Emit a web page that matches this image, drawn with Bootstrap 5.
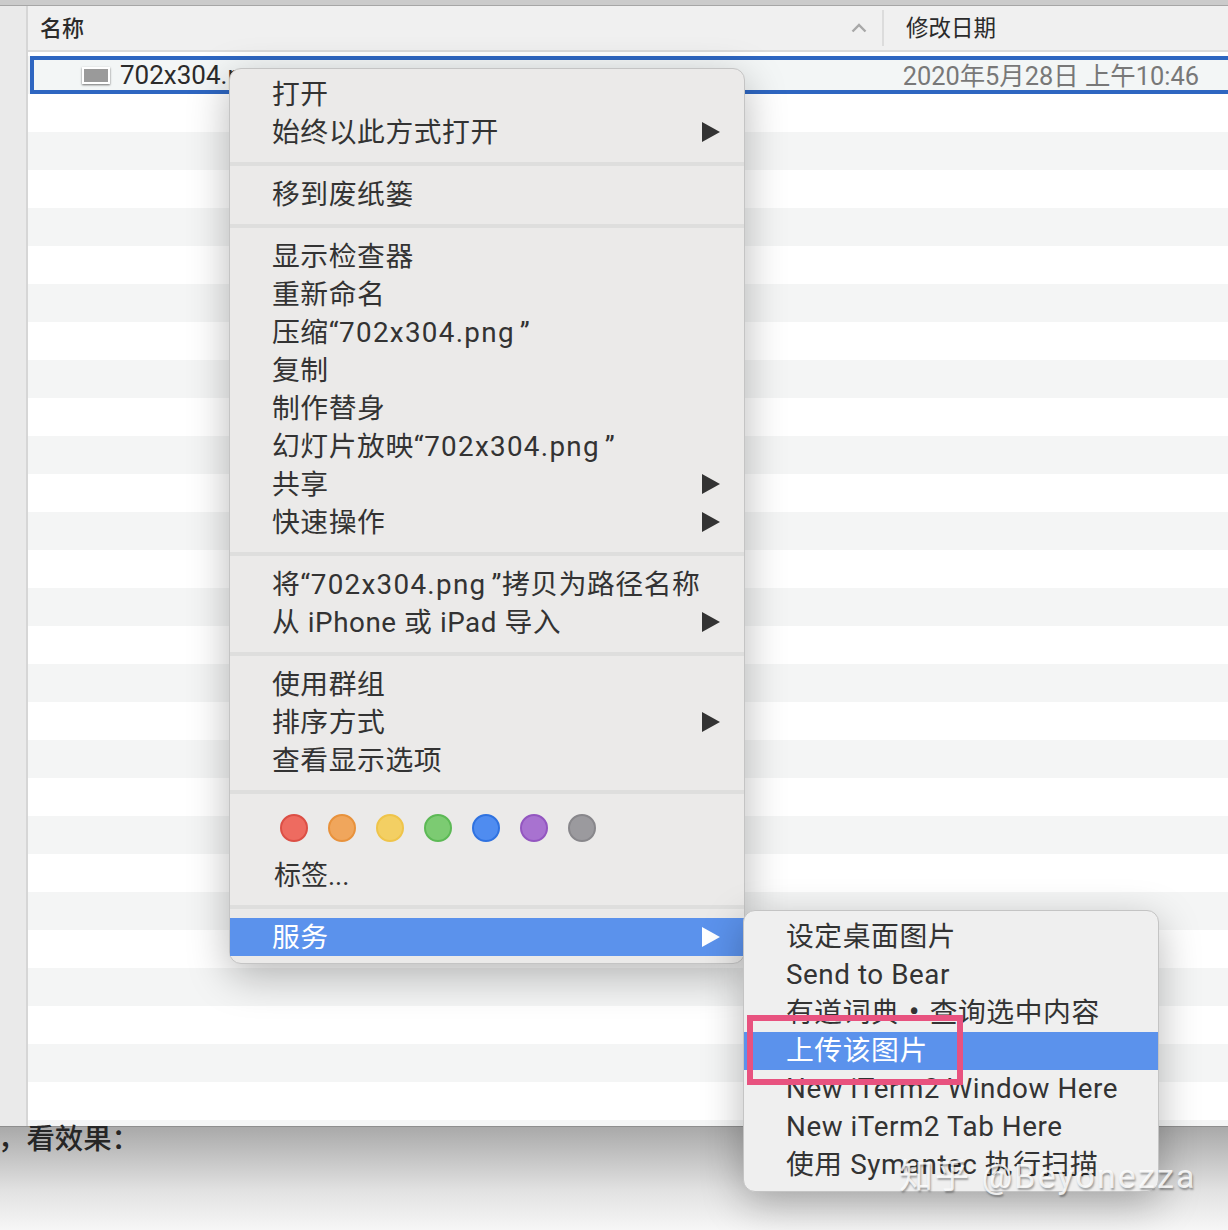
<!DOCTYPE html>
<html lang="zh-CN">
<head>
  <meta charset="UTF-8">
  <title>Finder 右键菜单</title>
  <meta name="viewport" content="width=device-width, initial-scale=1">
  <link href="https://cdn.jsdelivr.net/npm/bootstrap@5.3.3/dist/css/bootstrap.min.css" rel="stylesheet">
  <style>
    html, body { height: 1230px; }
    body {
      position: relative; overflow: hidden; background: #fff; color: #2b2b2b;
      font-family: Roboto, "Noto Sans CJK SC", sans-serif;
    }
    .top-strip { height: 6px; background: #cbcbcb; border-bottom: 1px solid #a6a6a6; }
    .finder-win { height: 1121px; border-bottom: 1px solid #8e8e8e; }
    .side-bar { width: 28px; background: #eaeaea; border-right: 2px solid #d6d6d6; }
    .col-head { height: 46px; background: #f0f0f0; border-bottom: 2px solid #dadada; font-size: 22px; line-height: 45px; }
    .name-head { width: 854px; padding-left: 12px; }
    .head-sep { width: 2px; height: 36px; margin-top: 4px; margin-left: 15px; background: #dcdcdc; }
    .date-head { padding-left: 22px; font-size: 22.5px; }
    .sort-caret { margin: 17px 0 0 -31px; width: 16px; height: 10px; }
    .file-list {
      padding-top: 4px;
      background: linear-gradient(#f4f5f5 50%, #fff 50%) 0 4px / 100% 76px;
    }
    .sel-row {
      height: 38px; margin-left: 2px; background: #f3f6f6;
      border: 4px solid #2e66c1; border-right: 0;
      font-size: 26px; line-height: 30px;
    }
    .file-icon { width: 28px; height: 17px; margin-left: 48px; background: #9a9a9a; border: 2px solid #fff; box-shadow: 0 1px 2px rgba(0,0,0,.55); }
    .file-name { margin-left: 10px; }
    .file-date { margin-left: auto; padding: 2px 29px 0 0; color: #787878; white-space: nowrap; font-size: 25.4px; }
    .page-foot { height: 103px; background: linear-gradient(#a9a9a9, #e2e2e2 62%, #f6f6f6 100%); }
    .foot-text { margin-left: -2px; font-size: 28.4px; line-height: 26px; font-weight: 500; color: #262626; }

    .ctx-menu.dropdown-menu {
      position: absolute; display: block; margin: 0; min-width: 0;
      background: #ebeae9; border: 1px solid #c4c4c4; border-radius: 12px;
      box-shadow: 0 12px 42px rgba(0,0,0,.28);
      font-size: 27.8px; letter-spacing: .55px; color: #333;
    }
    .menu-main.dropdown-menu { left: 229px; top: 68px; width: 516px; padding: 6px 0 7px; }
    .menu-sub.dropdown-menu { left: 743px; top: 910px; width: 416px; padding: 7px 0; background: #efefef; }
    .ctx-menu .dropdown-item {
      display: flex; justify-content: space-between; align-items: center;
      height: 38px; line-height: 38px; padding: 0 24px 0 42px; color: #333; white-space: nowrap;
    }
    .menu-main .dropdown-item { padding-top: 2px; }
    .ctx-menu .dropdown-item.active { background: #5b92ec; color: #fff; }
    .ctx-menu .dropdown-divider { height: 4px; margin: 11px 0 9px; border: 0; background: #dededd; opacity: 1; }
    .menu-arrow { width: 18px; height: 20px; fill: #333; flex: none; margin-top: -2px; }
    .active .menu-arrow { fill: #fff; }
    .tag-dots { height: 30px; margin-top: 20px; padding-left: 50px; gap: 20px; }
    .tag-dot { width: 28px; height: 28px; border-radius: 50%; border: 2px solid; }
    .tag-label { height: 37px; margin-top: 13px; padding-left: 44px; font-size: 27px; line-height: 38px; letter-spacing: 0; }
    .file-ref { letter-spacing: 1.3px; margin-right: 5px; }
    .dot-sep { margin: 0 2px; font-size: 32px; line-height: 1; }

    .pink-box { position: absolute; z-index: 1001; left: 747px; top: 1015px; width: 216px; height: 70px; border: 6px solid #e8527f; }
    .zhihu-mark {
      position: absolute; z-index: 1001; left: 899px; top: 1154px; font-size: 34px; letter-spacing: 2.1px; line-height: 44px; white-space: nowrap;
      color: rgba(255,255,255,.82); text-shadow: 1px 2px 2px rgba(0,0,0,.35);
    }
  </style>
</head>
<body>

  <div class="top-strip"></div>
  <div class="finder-win d-flex">
    <div class="side-bar flex-shrink-0"></div>
    <div class="flex-grow-1 d-flex flex-column">
      <div class="col-head d-flex">
        <div class="name-head fw-medium">名称</div>
        <svg class="sort-caret" viewBox="0 0 16 10"><path d="M1.5 8.5 8 2l6.5 6.5" fill="none" stroke="#a8a8a8" stroke-width="2.4"/></svg>
        <div class="head-sep"></div>
        <div class="date-head">修改日期</div>
      </div>
      <div class="file-list flex-grow-1">
        <div class="sel-row d-flex align-items-center">
          <div class="file-icon flex-shrink-0"></div>
          <div class="file-name">702x304.png</div>
          <div class="file-date">2020年5月28日 上午10:46</div>
        </div>
      </div>
    </div>
  </div>
  <div class="page-foot">
    <div class="foot-text">，看效果：</div>
  </div>

  <div class="dropdown-menu show ctx-menu menu-main">
    <a class="dropdown-item">打开</a>
    <a class="dropdown-item">始终以此方式打开<svg class="menu-arrow" viewBox="0 0 18 20"><path d="M0 0l18 10L0 20z"/></svg></a>
    <hr class="dropdown-divider">
    <a class="dropdown-item">移到废纸篓</a>
    <hr class="dropdown-divider">
    <a class="dropdown-item">显示检查器</a>
    <a class="dropdown-item">重新命名</a>
    <a class="dropdown-item"><span>压缩“<span class="file-ref">702x304.png</span>”</span></a>
    <a class="dropdown-item">复制</a>
    <a class="dropdown-item">制作替身</a>
    <a class="dropdown-item"><span>幻灯片放映“<span class="file-ref">702x304.png</span>”</span></a>
    <a class="dropdown-item">共享<svg class="menu-arrow" viewBox="0 0 18 20"><path d="M0 0l18 10L0 20z"/></svg></a>
    <a class="dropdown-item">快速操作<svg class="menu-arrow" viewBox="0 0 18 20"><path d="M0 0l18 10L0 20z"/></svg></a>
    <hr class="dropdown-divider">
    <a class="dropdown-item"><span>将“<span class="file-ref">702x304.png</span>”拷贝为路径名称</span></a>
    <a class="dropdown-item">从 iPhone 或 iPad 导入<svg class="menu-arrow" viewBox="0 0 18 20"><path d="M0 0l18 10L0 20z"/></svg></a>
    <hr class="dropdown-divider">
    <a class="dropdown-item">使用群组</a>
    <a class="dropdown-item">排序方式<svg class="menu-arrow" viewBox="0 0 18 20"><path d="M0 0l18 10L0 20z"/></svg></a>
    <a class="dropdown-item">查看显示选项</a>
    <hr class="dropdown-divider">
    <div class="tag-dots d-flex">
      <span class="tag-dot" style="background:#ee6b60;border-color:#dc4f45"></span>
      <span class="tag-dot" style="background:#f0a65c;border-color:#e8923c"></span>
      <span class="tag-dot" style="background:#f3cf63;border-color:#efc44a"></span>
      <span class="tag-dot" style="background:#7ccb72;border-color:#5cb955"></span>
      <span class="tag-dot" style="background:#4f8cf0;border-color:#2f72e0"></span>
      <span class="tag-dot" style="background:#a872d0;border-color:#9356c0"></span>
      <span class="tag-dot" style="background:#9b9a9e;border-color:#88878b"></span>
    </div>
    <div class="tag-label">标签...</div>
    <hr class="dropdown-divider">
    <a class="dropdown-item active">服务<svg class="menu-arrow" viewBox="0 0 18 20"><path d="M0 0l18 10L0 20z"/></svg></a>
  </div>

  <div class="dropdown-menu show ctx-menu menu-sub">
    <a class="dropdown-item">设定桌面图片</a>
    <a class="dropdown-item">Send to Bear</a>
    <a class="dropdown-item"><span>有道词典 <span class="dot-sep">•</span> 查询选中内容</span></a>
    <a class="dropdown-item active">上传该图片</a>
    <a class="dropdown-item">New iTerm2 Window Here</a>
    <a class="dropdown-item">New iTerm2 Tab Here</a>
    <a class="dropdown-item">使用 Symantec 执行扫描</a>
  </div>

  <div class="pink-box"></div>
  <div class="zhihu-mark">知乎 @Beyonezza</div>

</body>
</html>
